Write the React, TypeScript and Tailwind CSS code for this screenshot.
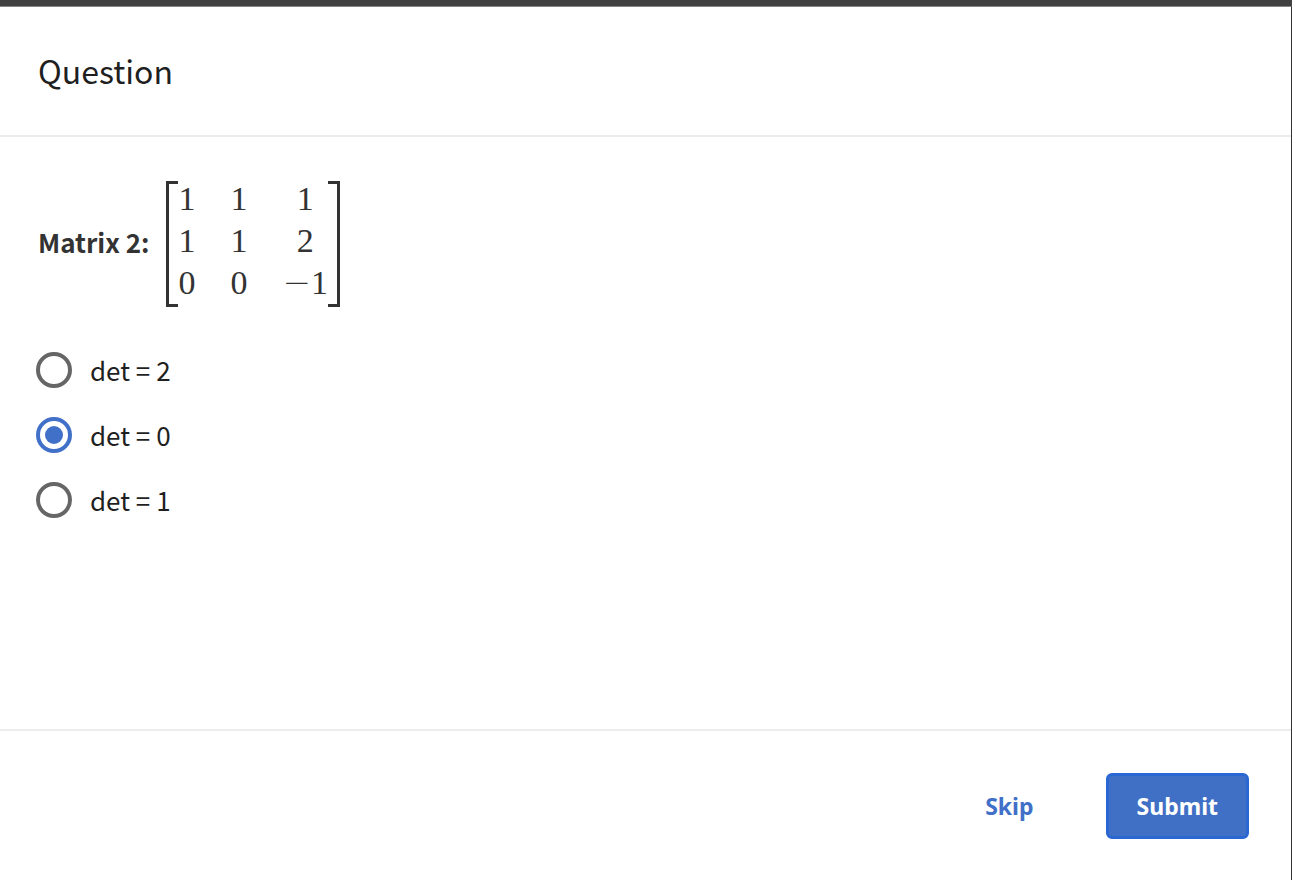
import { useState } from "react";

const matrix = [
  ["1", "1", "1"],
  ["1", "1", "2"],
  ["0", "0", "−1"],
];

const options = ["2", "0", "1"];

function Entry({ value }: { value: string }) {
  if (!value.startsWith("−")) return <>{value}</>;
  return (
    <>
      <span className="font-['DejaVu_Sans',sans-serif] leading-none font-extralight">−</span>
      {value.slice(1)}
    </>
  );
}

function Matrix() {
  return (
    <div className="flex font-['Liberation_Serif',serif] text-[34px] leading-[42px] text-[#333]">
      <span aria-hidden="true" className="w-3 border-y-3 border-l-3 border-[#333]" />
      <table className="mt-[-3px] mb-[3px] border-collapse text-center">
        <tbody>
          {matrix.map((row, index) => (
            <tr key={index}>
              <td className="py-0 pr-0 pl-px">{row[0]}</td>
              <td className="px-[35px] py-0">{row[1]}</td>
              <td className="p-0">
                <Entry value={row[2]} />
              </td>
            </tr>
          ))}
        </tbody>
      </table>
      <span aria-hidden="true" className="w-3 border-y-3 border-r-3 border-[#333]" />
    </div>
  );
}

export default function App() {
  const [answer, setAnswer] = useState("0");

  return (
    <div className="flex min-h-screen flex-col border-t-6 border-t-[#414141] bg-white font-['Noto_Sans_CJK_SC',sans-serif] text-[#1f1f1f]">
      <form
        className="flex flex-1 flex-col border-t border-r border-t-[#8a8787] border-r-[#333]"
        onSubmit={(event) => event.preventDefault()}
      >
        <header className="border-b-2 border-[#ececec] px-[38px] pt-[39px] pb-[41px]">
          <h1 className="text-[32px] leading-12">Question</h1>
        </header>

        <main className="flex-1 px-9 py-11">
          <div className="flex items-center gap-4 pl-[2px]">
            <strong className="pb-1 text-[26px] leading-9 font-bold text-[#333]">Matrix 2:</strong>
            <Matrix />
          </div>
          <fieldset className="mt-[45px] flex flex-col items-start gap-[29px]">
            {options.map((option) => (
              <label key={option} className="flex cursor-pointer items-center gap-[18px] text-[26px] leading-9">
                <input
                  type="radio"
                  name="determinant"
                  value={option}
                  checked={answer === option}
                  onChange={() => setAnswer(option)}
                  className="grid size-9 cursor-pointer appearance-none place-items-center rounded-full border-4 border-[#666] before:size-[18px] before:rounded-full before:bg-transparent checked:border-[#4070c8] checked:before:bg-[#4070c8]"
                />
                det = {option}
              </label>
            ))}
          </fieldset>
        </main>

        <footer className="flex items-center justify-end gap-10 border-t-2 border-[#ececec] px-[42px] pt-[42px] pb-[41px] font-['Noto_Sans',sans-serif] text-[23px] leading-8 font-bold">
          <button type="button" className="cursor-pointer px-8 py-4 text-[#4070c8]">
            Skip
          </button>
          <button
            type="submit"
            className="cursor-pointer rounded-md border-3 border-[#2b67d3] bg-[#4070c6] px-7 py-[14px] text-white"
          >
            Submit
          </button>
        </footer>
      </form>
    </div>
  );
}
